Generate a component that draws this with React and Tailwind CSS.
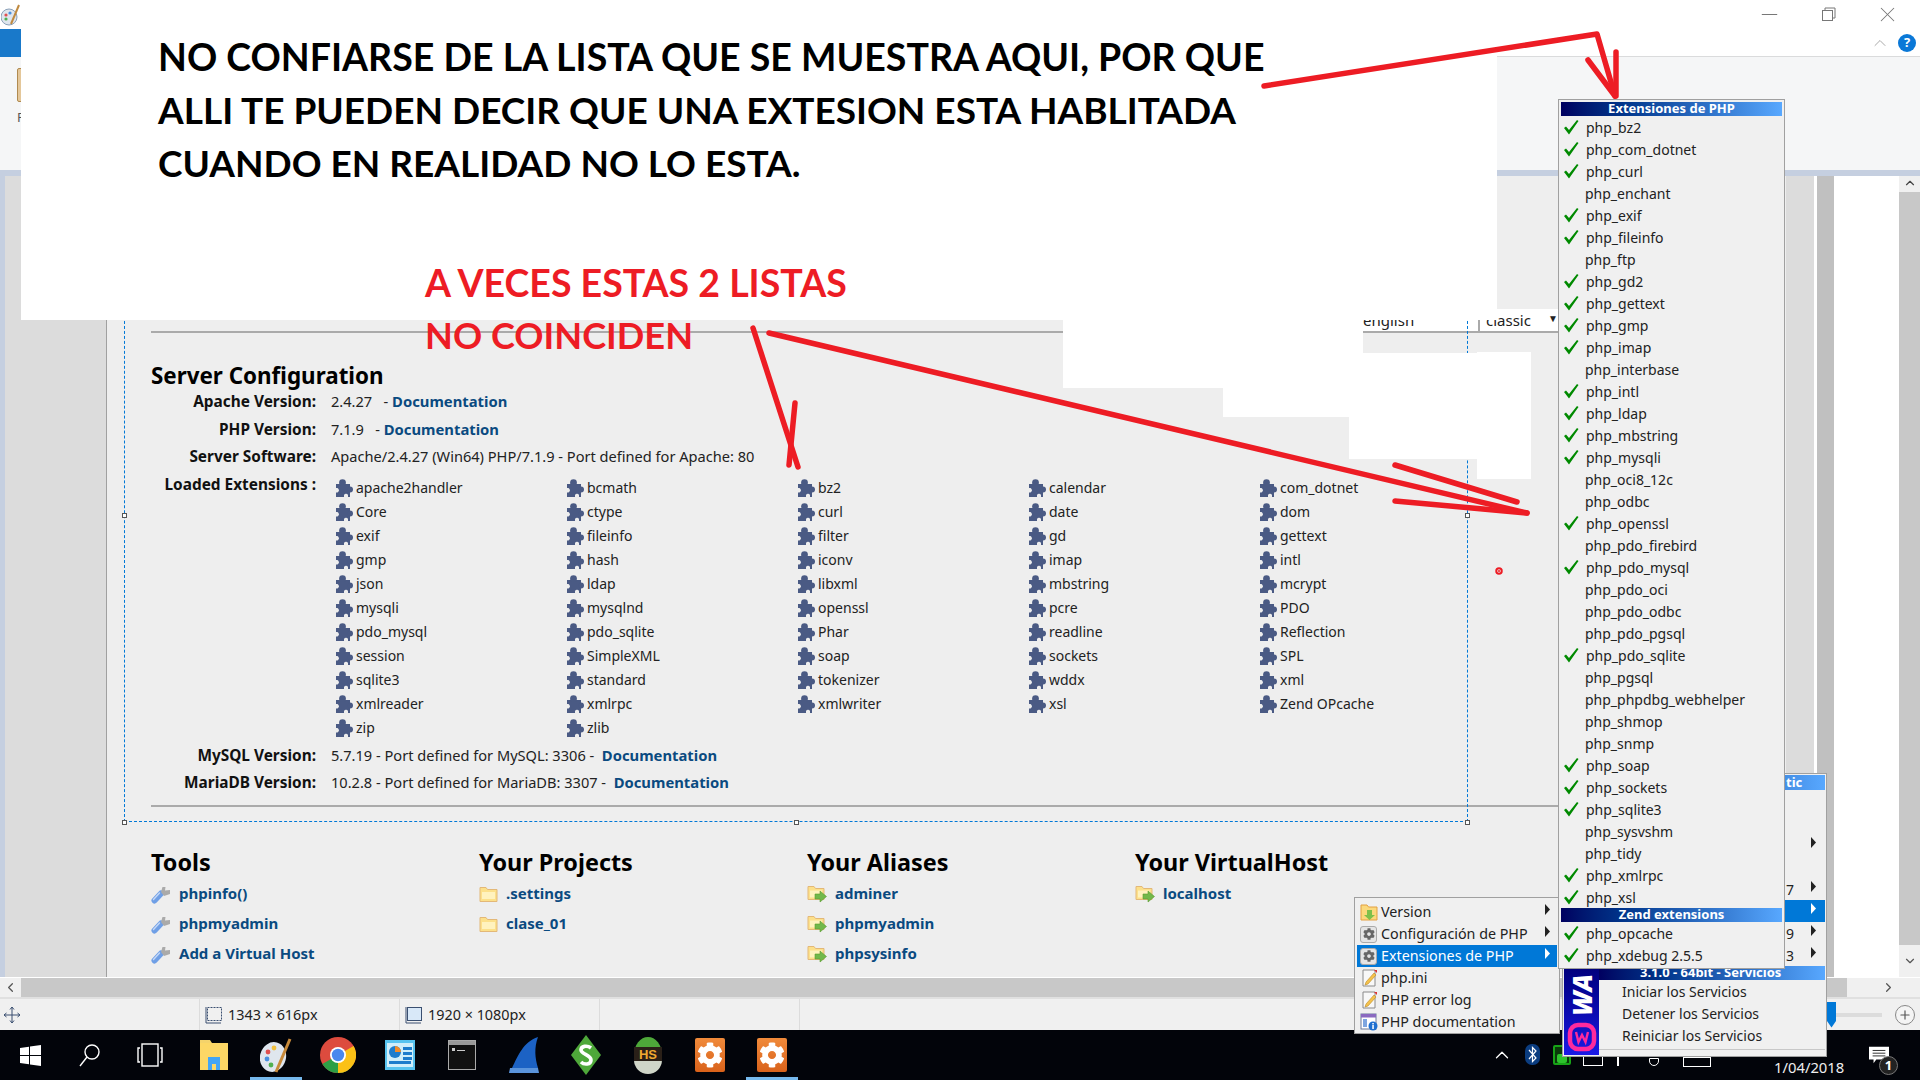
import React from "react";
import { FaCog } from "react-icons/fa";
import { ChevronUp, ChevronDown, ChevronLeft, ChevronRight, Plus, X, Minus } from "lucide-react";

const EXT = [
  "apache2handler","bcmath","bz2","calendar","com_dotnet",
  "Core","ctype","curl","date","dom",
  "exif","fileinfo","filter","gd","gettext",
  "gmp","hash","iconv","imap","intl",
  "json","ldap","libxml","mbstring","mcrypt",
  "mysqli","mysqlnd","openssl","pcre","PDO",
  "pdo_mysql","pdo_sqlite","Phar","readline","Reflection",
  "session","SimpleXML","soap","sockets","SPL",
  "sqlite3","standard","tokenizer","wddx","xml",
  "xmlreader","xmlrpc","xmlwriter","xsl","Zend OPcache",
  "zip","zlib",
];

const PHP_EXT = [
  ["php_bz2",1],["php_com_dotnet",1],["php_curl",1],["php_enchant",0],["php_exif",1],["php_fileinfo",1],
  ["php_ftp",0],["php_gd2",1],["php_gettext",1],["php_gmp",1],["php_imap",1],["php_interbase",0],
  ["php_intl",1],["php_ldap",1],["php_mbstring",1],["php_mysqli",1],["php_oci8_12c",0],["php_odbc",0],
  ["php_openssl",1],["php_pdo_firebird",0],["php_pdo_mysql",1],["php_pdo_oci",0],["php_pdo_odbc",0],
  ["php_pdo_pgsql",0],["php_pdo_sqlite",1],["php_pgsql",0],["php_phpdbg_webhelper",0],["php_shmop",0],
  ["php_snmp",0],["php_soap",1],["php_sockets",1],["php_sqlite3",1],["php_sysvshm",0],["php_tidy",0],
  ["php_xmlrpc",1],["php_xsl",1],
];

function Check() {
  return (
    <svg width="15" height="15" viewBox="0 0 15 15" className="shrink-0">
      <polygon points="0,8 2,6.5 5,10 13,0 14.5,1 5,14.5" fill="#008a00" />
    </svg>
  );
}

function ExtRow({ name, on }) {
  return (
    <div className={on ? "flex h-[22px] items-center pl-[3px]" : "flex h-[22px] items-center pl-[24px]"}>
      {on ? <Check /> : null}
      <span className={on ? "ml-[7px]" : ""}>{name}</span>
    </div>
  );
}

function Arrow() {
  return (
    <svg width="7" height="11" viewBox="0 0 7 11" className="-translate-y-[3px]">
      <polygon points="1,0 6,5.5 1,11" fill="currentColor" />
    </svg>
  );
}

function Puzzle() {
  return (
    <svg width="18" height="18" viewBox="0 0 18 18" className="shrink-0">
      <rect x="1" y="5" width="14" height="13" fill="#4a5a84" />
      <circle cx="7.5" cy="3.7" r="3.4" fill="#4a5a84" />
      <circle cx="15" cy="10.5" r="3" fill="#4a5a84" />
      <path d="M0 9h2.5a2.5 2.5 0 0 1 0 4.5H0z" fill="#eeeeee" />
      <path d="M9 18v-2a2.2 2.2 0 0 1 4 0v2z" fill="#eeeeee" />
    </svg>
  );
}

function Folder() {
  return (
    <svg width="19" height="16" viewBox="0 0 19 16" className="shrink-0">
      <path d="M1 1.5h6l1.5 2H18v12H1z" fill="#fce08a" stroke="#e3b878" />
      <rect x="3" y="6" width="13" height="7" fill="#fff2be" />
    </svg>
  );
}

function AliasFolder() {
  return (
    <svg width="20" height="18" viewBox="0 0 20 18" className="shrink-0">
      <path d="M1 1.5h6l1.5 2H17v11H1z" fill="#fce08a" stroke="#e3b878" />
      <rect x="3" y="5.5" width="12" height="7" fill="#fff2be" />
      <path d="M8 9h5V6l6.5 5.5L13 17v-3H8z" fill="#72b84a" stroke="#5d9a30" strokeWidth="0.6" />
    </svg>
  );
}

function Wrench() {
  return (
    <svg width="20" height="20" viewBox="0 0 20 20" className="shrink-0">
      <line x1="3.5" y1="16.5" x2="10" y2="9.5" stroke="#6f9fe6" strokeWidth="6" strokeLinecap="round" />
      <line x1="2.5" y1="15.5" x2="8.5" y2="9" stroke="#c4d8f6" strokeWidth="1.4" strokeLinecap="round" />
      <path d="M10 8l1.5-5h3l-.5 3.5 5-.5v4l-6 2z" fill="#aaaaaa" />
    </svg>
  );
}

function TaskIcon({ children, active }) {
  return (
    <div className="relative flex h-full w-[62px] shrink-0 items-center justify-center">
      {children}
      {active ? <div className="absolute bottom-0 left-[5px] right-[5px] h-[3px] bg-[#76b9ed]" /> : null}
    </div>
  );
}

function OrangeGear() {
  return (
    <div className="flex h-[34px] w-[30px] items-center justify-center rounded-[2px] bg-linear-to-b from-[#f08a3a] to-[#d9621a] text-white">
      <FaCog size={26} />
    </div>
  );
}

function Handle({ className }) {
  return <div className={"absolute h-[5px] w-[5px] border border-[#555] bg-white " + className} />;
}

function InfoRow({ label, children }) {
  return (
    <div className="flex h-[27.5px] items-center">
      <div className="w-[165px] whitespace-nowrap text-right text-[15.4px] font-bold text-[#111]">{label}</div>
      <div className="ml-[15px] whitespace-pre text-[14.6px] text-[#222]">{children}</div>
    </div>
  );
}

function Doc() {
  return <span className="text-[14.8px] font-bold text-[#0a4a80]">Documentation</span>;
}

function Section({ title, items, icon }) {
  return (
    <div className="w-[328px] shrink-0">
      <div className="h-[32px] text-[23.4px] font-bold leading-[30px] text-black">{title}</div>
      {items.map((t) => (
        <div key={t} className="flex h-[30px] items-center gap-[8px] text-[15px] font-bold text-[#0a4a80]">
          {icon}
          <span>{t}</span>
        </div>
      ))}
    </div>
  );
}

function MenuIconGear() {
  return (
    <div className="flex h-[17px] w-[17px] items-center justify-center rounded-[3px] border border-[#aaa] bg-[#e4e4e4] text-[#666]">
      <FaCog size={12} />
    </div>
  );
}

function MenuIconPage() {
  return (
    <svg width="18" height="18" viewBox="0 0 18 18">
      <path d="M3 1h12v16H3z" fill="#f8f8f8" stroke="#8a8a8a" />
      <path d="M6 13l8-9 2 2-8 9-3 1z" fill="#f5c24c" stroke="#b98a25" strokeWidth="0.6" />
      <path d="M14 1h3v3z" fill="#d33" />
    </svg>
  );
}

function MenuIconDoc() {
  return (
    <svg width="18" height="18" viewBox="0 0 18 18">
      <rect x="1" y="1" width="15" height="15" fill="#fff" stroke="#6a7a9a" />
      <rect x="1" y="1" width="15" height="3.5" fill="#8a6ac0" />
      <rect x="3" y="6" width="4" height="8" fill="#7ea6e0" />
      <circle cx="13" cy="13" r="4.5" fill="#1f6fd0" />
      <rect x="12.3" y="12" width="1.5" height="4" fill="#fff" />
      <rect x="12.3" y="10" width="1.5" height="1.4" fill="#fff" />
    </svg>
  );
}

export default function App() {
  const body = "font-['Noto_Sans',sans-serif]";
  return (
    <div className={"relative flex h-[1080px] w-[1920px] flex-col overflow-hidden bg-white text-[14px] " + body}>
      {/* title bar + tabs */}
      <div className="relative h-[57px] shrink-0 border-b border-[#dadbdc] bg-white">
        <div className="flex h-[29px] items-center pl-[1px]">
          <svg width="20" height="22" viewBox="0 0 20 22">
            <ellipse cx="8" cy="13" rx="8" ry="8" fill="#dfe6ee" stroke="#8aa0b8" />
            <circle cx="5" cy="11" r="1.6" fill="#e05050" />
            <circle cx="9" cy="9" r="1.6" fill="#4a90e0" />
            <circle cx="5" cy="15" r="1.6" fill="#50b050" />
            <line x1="10" y1="20" x2="18" y2="1" stroke="#c08a40" strokeWidth="2" />
          </svg>
        </div>
        <div className="h-[28px] w-[21px] bg-[#1979ca]" />
        <div className="absolute right-[20px] top-0 flex h-[29px] items-center gap-[39px] text-[#777]">
          <Minus size={25} strokeWidth={1} />
          <svg width="15" height="15" viewBox="0 0 15 15" fill="none" stroke="#777">
            <rect x="1.5" y="3.5" width="10" height="10" />
            <path d="M4 3V1h10v10h-2" />
          </svg>
          <X size={25} strokeWidth={1} />
        </div>
        <div className="absolute right-[4px] top-[33px] flex items-center gap-[8px]">
          <ChevronUp size={20} strokeWidth={1.2} className="text-[#aaa]" />
          <div className="flex h-[18px] w-[18px] items-center justify-center rounded-full bg-[#0a78d7] text-[13px] font-bold text-white">?</div>
        </div>
      </div>

      {/* ribbon */}
      <div className="h-[113px] shrink-0 bg-[#f5f6f7] pl-[17px] pt-[11px]">
        <div className="h-[34px] w-[6px] rounded-[2px] border border-[#b08a50] bg-[#e4c79a]" />
        <div className="mt-[6px] text-[13px] text-[#555]">P</div>
      </div>
      <div className="h-[6px] shrink-0 bg-[#c5cfe0]" />

      {/* work area */}
      <div className="flex min-h-0 flex-1">
        <div className="w-[5px] shrink-0 bg-[#c5cfe0]" />
        <div className="w-[101px] shrink-0 bg-[#dcdcdc]" />
        <div className="relative w-[1680px] shrink-0 border-l border-[#a0a0a0] bg-[#eeeeee] pl-[44px]">
          {/* top selectors */}
          <div className="h-[133px]" />
          <div className="flex h-[24px] w-[1409px] justify-end border-b-2 border-[#aaaaaa] text-[15px] leading-none text-[#222]">
            <div className="flex w-[115px] items-start justify-between overflow-hidden bg-white pr-[9px] pt-[4px]">
              <span>english</span>
              <span className="text-[8px]">▼</span>
            </div>
            <div className="flex w-[82px] items-start justify-between border-l-2 border-[#aaaaaa] bg-white pl-[6px] pr-[2px] pt-[4px]">
              <span>classic</span>
              <span className="text-[10px]">▼</span>
            </div>
          </div>

          <div className="h-[29px]" />
          <div className="h-[26px] text-[22.4px] font-bold leading-[28px] text-black">Server Configuration</div>

          <InfoRow label="Apache Version:">{"2.4.27   - "}<Doc /></InfoRow>
          <InfoRow label="PHP Version:">{"7.1.9   - "}<Doc /></InfoRow>
          <InfoRow label="Server Software:">Apache/2.4.27 (Win64) PHP/7.1.9 - Port defined for Apache: 80</InfoRow>

          <div className="mt-[5px] flex">
            <div className="w-[165px] whitespace-nowrap text-right text-[15.4px] font-bold leading-[18px] text-[#111]">Loaded Extensions :</div>
            <div className="ml-[19px] grid w-[1155px] grid-cols-5">
              {EXT.map((e) => (
                <div key={e} className="flex h-[24px] items-center gap-[3px] text-[#222]">
                  <Puzzle />
                  <span>{e}</span>
                </div>
              ))}
            </div>
          </div>

          <div className="h-[2px]" />
          <InfoRow label="MySQL Version:">{"5.7.19 - Port defined for MySQL: 3306 -  "}<Doc /></InfoRow>
          <InfoRow label="MariaDB Version:">{"10.2.8 - Port defined for MariaDB: 3307 -  "}<Doc /></InfoRow>
          <div className="mt-[8px] h-[2px] w-[1409px] bg-[#aaaaaa]" />

          <div className="mt-[40px] flex">
            <Section title="Tools" icon={<Wrench />} items={["phpinfo()", "phpmyadmin", "Add a Virtual Host"]} />
            <Section title="Your Projects" icon={<Folder />} items={[".settings", "clase_01"]} />
            <Section title="Your Aliases" icon={<AliasFolder />} items={["adminer", "phpmyadmin", "phpsysinfo"]} />
            <Section title="Your VirtualHost" icon={<AliasFolder />} items={["localhost"]} />
          </div>

          {/* selection box */}
          <div className="absolute left-[17px] top-[140px] h-[506px] w-[1344px] border-b border-l border-r border-dashed border-[#0078d7]" />
          <Handle className="left-[15px] top-[337px]" />
          <Handle className="left-[15px] top-[644px]" />
          <Handle className="left-[687px] top-[644px]" />
          <Handle className="left-[1358px] top-[337px]" />
          <Handle className="left-[1358px] top-[644px]" />
        </div>
        <div className="w-[28px] shrink-0 bg-[#dcdcdc]" />
        <div className="w-[3px] shrink-0 bg-white" />
        <div className="w-[17px] shrink-0 bg-[#c0c0c0]" />
        <div className="w-[65px] shrink-0 bg-white" />
        <div className="flex w-[21px] shrink-0 flex-col bg-[#c8c8c8]">
          <div className="flex h-[16px] items-start justify-center bg-[#f0f0f0]">
            <ChevronUp size={14} className="text-[#444]" />
          </div>
          <div className="flex-1" />
          <div className="flex h-[32px] items-center justify-center bg-[#f0f0f0]">
            <ChevronDown size={14} className="text-[#555]" />
          </div>
        </div>
      </div>

      {/* horizontal scrollbar */}
      <div className="mt-[1px] flex h-[19px] shrink-0 bg-[#f0f0f0]">
        <div className="flex w-[21px] items-center justify-center">
          <ChevronLeft size={15} className="text-[#555]" />
        </div>
        <div className="w-[1826px] bg-[#c8c8c8]" />
        <div className="flex flex-1 items-center justify-center pl-[10px]">
          <ChevronRight size={15} className="text-[#555]" />
        </div>
      </div>

      {/* status bar */}
      <div className="flex h-[33px] shrink-0 items-center border-t-2 border-[#e0e0e0] bg-[#f0f0f0] text-[14.4px] text-[#222]">
        <div className="flex h-full w-[200px] items-center border-r border-[#dcdcdc] pl-[3px]">
          <svg width="18" height="18" viewBox="0 0 18 18" fill="none" stroke="#3a4f70">
            <path d="M9 1v16M1 9h16M9 1L7 3.5M9 1l2 2.5M9 17l-2-2.5M9 17l2-2.5M1 9l2.5-2M1 9l2.5 2M17 9l-2.5-2M17 9l-2.5 2" />
          </svg>
        </div>
        <div className="flex h-full w-[200px] items-center gap-[5px] border-r border-[#dcdcdc] pl-[5px]">
          <svg width="18" height="18" viewBox="0 0 18 18" fill="none" stroke="#3a4f70">
            <rect x="2.5" y="1.5" width="14" height="13" strokeDasharray="2 1" />
            <path d="M1 1v16h15" />
          </svg>
          <span>1343 × 616px</span>
        </div>
        <div className="flex h-full w-[200px] items-center gap-[5px] border-r border-[#dcdcdc] pl-[5px]">
          <svg width="18" height="18" viewBox="0 0 18 18" fill="none" stroke="#3a4f70">
            <rect x="2.5" y="1.5" width="14" height="13" fill="#d8e8f8" />
            <path d="M1 1v16h15" />
          </svg>
          <span>1920 × 1080px</span>
        </div>
        <div className="h-full w-[200px] border-r border-[#dcdcdc]" />
        <div className="ml-auto flex items-center pr-[5px]">
          <div className="h-[26px] w-[9px] bg-[#0078d7] [clip-path:polygon(0_0,100%_0,100%_75%,50%_100%,0_75%)]" />
          <div className="mr-[13px] h-[4px] w-[46px] bg-[#dcdcdc]" />
          <div className="flex h-[20px] w-[20px] items-center justify-center rounded-full border border-[#888] bg-[#f4f4f4] text-[#555]">
            <Plus size={14} strokeWidth={2} />
          </div>
        </div>
      </div>

      {/* taskbar */}
      <div className="flex h-[50px] shrink-0 items-center bg-[#02040a] text-white">
        <div className="flex h-full w-[60px] items-center justify-center">
          <svg width="21" height="21" viewBox="0 0 21 21" fill="#fff">
            <polygon points="0,3 9,1.7 9,10 0,10" />
            <polygon points="10,1.5 21,0 21,10 10,10" />
            <polygon points="0,11 9,11 9,19.3 0,18" />
            <polygon points="10,11 21,11 21,21 10,19.5" />
          </svg>
        </div>
        <div className="flex h-full w-[60px] items-center justify-center">
          <svg width="22" height="24" viewBox="0 0 22 24" fill="none" stroke="#fff" strokeWidth="1.4">
            <circle cx="13" cy="9" r="7" />
            <line x1="8" y1="14" x2="1" y2="23" />
          </svg>
        </div>
        <div className="flex h-full w-[60px] items-center justify-center">
          <svg width="26" height="24" viewBox="0 0 26 24" fill="none" stroke="#fff" strokeWidth="1.4">
            <rect x="5" y="1" width="16" height="22" />
            <path d="M3 5H1v14h2M23 5h2v14h-2" />
          </svg>
        </div>
        <div className="w-[3px]" />
        <TaskIcon>
          <svg width="30" height="36" viewBox="0 0 30 36">
            <path d="M1 3h10l2 3h-12z" fill="#f4d36b" />
            <rect x="1" y="6" width="28" height="27" fill="#fcd765" />
            <rect x="9" y="20" width="12" height="13" fill="#42a5f5" />
            <rect x="13" y="27" width="4" height="6" fill="#fcd765" />
          </svg>
        </TaskIcon>
        <TaskIcon active>
          <svg width="32" height="38" viewBox="0 0 32 38">
            <ellipse cx="13" cy="21" rx="13" ry="15" fill="#dfe6ee" transform="rotate(15 13 21)" />
            <circle cx="8" cy="16" r="2.4" fill="#e05050" />
            <circle cx="14" cy="12" r="2.4" fill="#f0c040" />
            <circle cx="7" cy="23" r="2.4" fill="#4a90e0" />
            <circle cx="11" cy="29" r="2.4" fill="#50b050" />
            <line x1="16" y1="36" x2="30" y2="3" stroke="#c88a3a" strokeWidth="3" />
          </svg>
        </TaskIcon>
        <TaskIcon>
          <svg width="36" height="36" viewBox="0 0 36 36">
            <circle cx="18" cy="18" r="18" fill="#dd4b3e" />
            <path d="M18 18L2.4 27A18 18 0 0 0 18 36 18 18 0 0 0 33.6 27z" fill="#2c9f45" />
            <path d="M18 18L33.6 9A18 18 0 0 1 18 36z" fill="#fbc116" />
            <circle cx="18" cy="18" r="8" fill="#fff" />
            <circle cx="18" cy="18" r="6.2" fill="#4a88ee" />
          </svg>
        </TaskIcon>
        <TaskIcon>
          <svg width="30" height="30" viewBox="0 0 30 30">
            <rect width="30" height="30" fill="#57c3ef" />
            <rect x="2" y="3" width="26" height="24" fill="#cfeefa" />
            <circle cx="10" cy="12" r="6" fill="#1c7ccc" />
            <path d="M10 12V6a6 6 0 0 1 6 6z" fill="#f28c28" />
            <rect x="18" y="7" width="9" height="3" fill="#1c7ccc" />
            <rect x="18" y="12" width="9" height="3" fill="#1c7ccc" />
            <rect x="18" y="17" width="9" height="3" fill="#1c7ccc" />
            <rect x="4" y="21" width="22" height="3" fill="#1c7ccc" />
          </svg>
        </TaskIcon>
        <TaskIcon>
          <svg width="28" height="30" viewBox="0 0 28 30">
            <rect x="0.5" y="0.5" width="27" height="29" fill="#111" stroke="#aaa" />
            <rect x="1" y="1" width="26" height="4" fill="#999" />
            <path d="M4 8h3v3H4zM9 10h8v1H9z" fill="#ccc" />
          </svg>
        </TaskIcon>
        <TaskIcon>
          <svg width="30" height="38" viewBox="0 0 30 38">
            <path d="M29 1C14 6 9 20 3 32h26c-3-10-4-20 0-31z" fill="#1c62c4" />
            <path d="M1 32h28l1 5H0z" fill="#5a94dc" />
          </svg>
        </TaskIcon>
        <TaskIcon>
          <svg width="30" height="40" viewBox="0 0 30 40">
            <polygon points="15,0 30,20 15,40 0,20" fill="#4ea83a" />
            <path d="M20 13c-4-3-10-2-10 2s10 5 10 10-7 5-10 2" fill="none" stroke="#fff" strokeWidth="3.6" />
          </svg>
        </TaskIcon>
        <TaskIcon>
          <svg width="36" height="38" viewBox="0 0 36 38">
            <ellipse cx="18" cy="19" rx="14" ry="18" fill="#4ea83a" />
            <path d="M4 24a14 14 0 0 0 28 0z" fill="#cfd5c8" />
            <rect x="4" y="11" width="28" height="14" fill="#2a2018" />
            <text x="18" y="23" textAnchor="middle" fontSize="13" fontWeight="700" fill="#f0a830" fontFamily="Liberation Sans">HS</text>
          </svg>
        </TaskIcon>
        <TaskIcon><OrangeGear /></TaskIcon>
        <TaskIcon active><OrangeGear /></TaskIcon>

        {/* tray */}
        <div className="ml-auto flex h-full items-center">
          <div className="flex w-[30px] justify-center text-white"><ChevronUp size={22} strokeWidth={1.4} /></div>
          <div className="flex h-[22px] w-[30px] justify-center">
            <svg width="15" height="21" viewBox="0 0 15 21">
              <rect width="15" height="21" rx="7" fill="#0b3d80" />
              <path d="M4 6l7 8-3.5 3.5V3.5L11 7l-7 8" fill="none" stroke="#fff" strokeWidth="1.2" />
            </svg>
          </div>
          <div className="flex w-[30px] justify-center">
            <div className="flex h-[20px] w-[18px] items-end justify-center rounded-[2px] border-2 border-[#17a317] bg-[#0a3a0a]">
              <div className="h-[9px] w-[10px] rounded-[2px] bg-[#2dc22d]" />
            </div>
          </div>
          <div className="flex w-[32px] justify-center pt-[12px]">
            <div className="h-[10px] w-[20px] border border-white" />
          </div>
          <div className="flex w-[32px] justify-center pt-[12px]">
            <div className="h-[10px] w-[16px] border-l-2 border-white" />
          </div>
          <div className="flex w-[26px] justify-center pt-[14px]">
            <div className="h-[8px] w-[10px] rounded-b-full border border-white" />
          </div>
          <div className="flex w-[60px] justify-center pt-[14px]">
            <div className="h-[10px] w-[28px] border border-white" />
          </div>
          <div className="flex h-full w-[142px] flex-col justify-end pb-[2px] pl-[47px] text-[14.8px] text-[#eee]">
            <span className="whitespace-nowrap">1/04/2018</span>
          </div>
          <div className="relative mr-[31px] flex h-full w-[20px] items-center justify-center">
            <svg width="22" height="18" viewBox="0 0 22 18">
              <path d="M0 0h22v14h-14l-3 4v-4h-5z" fill="#fff" />
              <path d="M4 4h14M4 7h14M4 10h14" stroke="#222" strokeWidth="1" />
            </svg>
            <div className="absolute left-[10px] top-[26px] flex h-[19px] w-[19px] items-center justify-center rounded-full border border-[#777] bg-[#222] text-[13px] font-bold text-white">1</div>
          </div>
        </div>
      </div>

      {/* white cover + note */}
      <div className="absolute left-[21px] top-0 h-[320px] w-[1476px] bg-white pl-[137px] pt-[30px] font-['Lato',sans-serif] font-bold leading-[53px] text-black">
        <div className="text-[37.5px]">NO CONFIARSE DE LA LISTA QUE SE MUESTRA AQUI, POR QUE</div>
        <div className="text-[37px]">ALLI TE PUEDEN DECIR QUE UNA EXTESION ESTA HABLITADA</div>
        <div className="text-[37px]">CUANDO EN REALIDAD NO LO ESTA.</div>
      </div>
      <div className="absolute left-[1063px] top-[320px] h-[68px] w-[300px] bg-white" />
      <div className="absolute left-[1223px] top-[388px] h-[29px] w-[140px] bg-white" />
      <div className="absolute left-[1349px] top-[417px] h-[42px] w-[128px] bg-white" />
      <div className="absolute left-[1363px] top-[353px] h-[64px] w-[114px] bg-white" />
      <div className="absolute left-[1477px] top-[352px] h-[127px] w-[54px] bg-white" />
      <div className="absolute left-[425px] top-[256px] font-['Lato',sans-serif] font-bold leading-[53px] text-[#ed1c24]">
        <div className="text-[37.5px]">A VECES ESTAS 2 LISTAS</div>
        <div className="text-[36.2px]">NO COINCIDEN</div>
      </div>

      {/* arrows */}
      <svg className="pointer-events-none absolute left-0 top-0" width="1920" height="1080" fill="none" stroke="#ed1c24" strokeWidth="5.5" strokeLinecap="round" strokeLinejoin="round">
        <polyline points="1264,86 1597,34 1615,96" />
        <line x1="1588" y1="60" x2="1615" y2="96" />
        <line x1="1616" y1="52" x2="1616" y2="96" />
        <line x1="753" y1="328" x2="798" y2="467" />
        <line x1="795" y1="403" x2="789" y2="465" />
        <line x1="769" y1="333" x2="1527" y2="513" />
        <line x1="1395" y1="465" x2="1517" y2="502" />
        <line x1="1395" y1="501" x2="1527" y2="513" />
        <circle cx="1499" cy="571" r="1" fill="#ed1c24" />
      </svg>

      {/* wamp main menu */}
      <div className="absolute left-[1562px] top-[773px] flex h-[284px] w-[265px] flex-col border border-[#a0a0a0] bg-[#f0f0f0] p-[1px] text-[14px] text-[#222]">
        <div className="flex h-[15px] shrink-0 items-center bg-linear-to-r from-[#000060] to-[#58a8ff] pl-[222px] text-[13px] font-bold text-white">tic</div>
        <div className="h-[22px]" />
        <div className="h-[22px]" />
        <div className="flex h-[22px] items-center justify-end pr-[8px]"><Arrow /></div>
        <div className="h-[22px]" />
        <div className="flex h-[22px] items-center pl-[222px] pr-[8px]"><span>7</span><span className="ml-auto"><Arrow /></span></div>
        <div className="flex h-[22px] items-center justify-end bg-[#0078d7] pr-[8px] text-white"><Arrow /></div>
        <div className="flex h-[22px] items-center pl-[222px] pr-[8px]"><span>9</span><span className="ml-auto"><Arrow /></span></div>
        <div className="flex h-[22px] items-center pl-[222px] pr-[8px]"><span>3</span><span className="ml-auto"><Arrow /></span></div>
        <div className="flex min-h-0 flex-1">
          <div className="flex w-[35px] shrink-0 flex-col items-center justify-end overflow-hidden bg-linear-to-b from-[#00007a] to-[#1a1ae6] pb-[3px]">
            <div className="shrink-0 rotate-180 whitespace-nowrap text-[26px] font-black italic leading-none text-white [writing-mode:vertical-rl]">WA</div>
            <svg width="30" height="30" viewBox="0 0 30 30" fill="none" stroke="#ff2a9d" strokeWidth="4.5" className="mt-[6px] shrink-0">
              <rect x="3" y="3" width="24" height="24" rx="8" />
              <path d="M9 10l2.5 10 3.5-7 3.5 7 2.5-10" strokeWidth="2.4" />
            </svg>
          </div>
          <div className="flex min-w-0 flex-1 flex-col">
            <div className="flex h-[14px] shrink-0 items-center bg-linear-to-r from-[#000060] to-[#58a8ff] pl-[41px] text-[13px] font-bold text-white">3.1.0 - 64bit - Servicios</div>
            <div className="flex h-[22px] items-center pl-[23px]">Iniciar los Servicios</div>
            <div className="flex h-[22px] items-center pl-[23px]">Detener los Servicios</div>
            <div className="flex h-[22px] items-center pl-[23px]">Reiniciar los Servicios</div>
            <div className="mt-[3px] h-px bg-[#c8c8c8]" />
          </div>
        </div>
      </div>

      {/* php sub menu */}
      <div className="absolute left-[1354px] top-[897px] flex h-[137px] w-[206px] flex-col border border-[#a0a0a0] bg-[#f0f0f0] px-[2px] py-[3px] text-[14.3px] text-[#222]">
        <div className="flex h-[22px] shrink-0 items-center gap-[3px] pl-[3px] pr-[6px]">
          <svg width="18" height="18" viewBox="0 0 18 18">
            <path d="M1 2h6l1.5 2H17v13H1z" fill="#fbd97c" stroke="#e3a040" />
            <path d="M7 7h5v5h3l-5.5 5L4 12h3z" fill="#7ec04a" />
          </svg>
          <span>Version</span><span className="ml-auto"><Arrow /></span>
        </div>
        <div className="flex h-[22px] shrink-0 items-center gap-[4px] pl-[3px] pr-[6px]">
          <MenuIconGear /><span>Configuración de PHP</span><span className="ml-auto"><Arrow /></span>
        </div>
        <div className="flex h-[22px] shrink-0 items-center gap-[4px] bg-[#0078d7] pl-[3px] pr-[6px] text-white">
          <MenuIconGear /><span>Extensiones de PHP</span><span className="ml-auto"><Arrow /></span>
        </div>
        <div className="flex h-[22px] shrink-0 items-center gap-[3px] pl-[3px] pr-[6px]"><MenuIconPage /><span>php.ini</span></div>
        <div className="flex h-[22px] shrink-0 items-center gap-[3px] pl-[3px] pr-[6px]"><MenuIconPage /><span>PHP error log</span></div>
        <div className="flex h-[22px] shrink-0 items-center gap-[3px] pl-[3px] pr-[6px]"><MenuIconDoc /><span>PHP documentation</span></div>
      </div>

      {/* extensions menu */}
      <div className="absolute left-[1558px] top-[99px] w-[227px] border border-[#a0a0a0] bg-[#f0f0f0] p-[2px] text-[14px] text-[#222]">
        <div className="flex h-[14px] items-center justify-center bg-linear-to-r from-[#000060] to-[#58a8ff] text-[13px] font-bold text-white">Extensiones de PHP</div>
        {PHP_EXT.map(([n, on]) => <ExtRow key={n} name={n} on={on} />)}
        <div className="flex h-[14px] items-center justify-center bg-linear-to-r from-[#000060] to-[#58a8ff] text-[13px] font-bold text-white">Zend extensions</div>
        <ExtRow name="php_opcache" on={1} />
        <ExtRow name="php_xdebug 2.5.5" on={1} />
      </div>
    </div>
  );
}
